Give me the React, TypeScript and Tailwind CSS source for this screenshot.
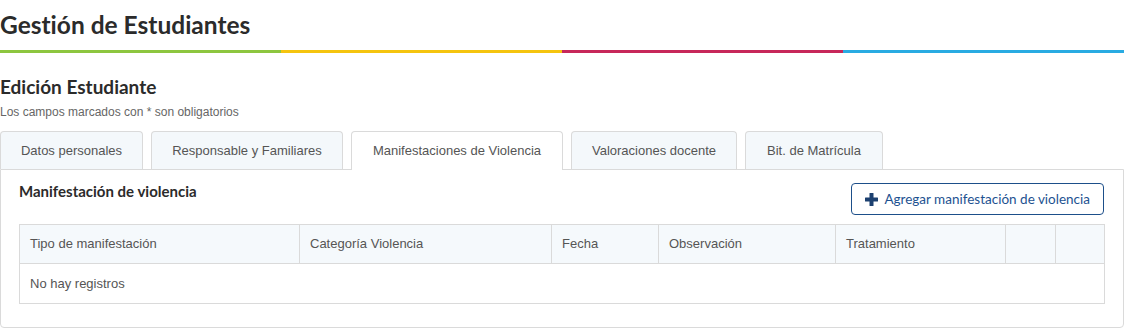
import React from "react";

const head = { fontFamily: "Lato, 'Noto Sans', sans-serif", fontVariantLigatures: "none" as const };

const tabs = [
  { label: "Datos personales", active: false, w: "w-[143px]" },
  { label: "Responsable y Familiares", active: false, w: "w-[192px]" },
  { label: "Manifestaciones de Violencia", active: true, w: "w-[212px]" },
  { label: "Valoraciones docente", active: false, w: "w-[166px]" },
  { label: "Bit. de Matrícula", active: false, w: "w-[138px]" },
];

const cols = [
  "Tipo de manifestación",
  "Categoría Violencia",
  "Fecha",
  "Observación",
  "Tratamiento",
  "",
  "",
];

export default function App() {
  return (
    <div
      className="w-[1124px] h-[335px] bg-white overflow-hidden text-[#555]"
      style={{ fontFamily: "'Liberation Sans', Arial, sans-serif" }}
    >
      <div className="h-[50px] flex items-center">
        <h1 style={head} className="text-[24.5px] leading-[30px] font-bold text-[#2b2b2b]">
          Gestión de Estudiantes
        </h1>
      </div>
      <div className="grid grid-cols-4 h-[3px]">
        <div className="bg-[#8dc63f]" />
        <div className="bg-[#f5c40f]" />
        <div className="bg-[#c7285a]" />
        <div className="bg-[#29abe2]" />
      </div>
      <h2 style={head} className="mt-[22px] text-[19px] leading-[24px] font-bold text-[#2b2b2b]">
        Edición Estudiante
      </h2>
      <p className="mt-[6px] text-[12px] leading-[15px] text-[#666]">
        Los campos marcados con * son obligatorios
      </p>
      <div className="mt-[11px] flex items-start gap-2 relative z-10">
        {tabs.map((t) => (
          <div
            key={t.label}
            className={
              (t.active
                ? "h-[39px] mb-[-1px] bg-white "
                : "h-[38px] bg-[#f4f8fb] ") +
              t.w +
              " flex items-center justify-center border border-b-0 border-[#dadada] rounded-t-[4px] text-[13px] text-[#555]"
            }
          >
            {t.label}
          </div>
        ))}
      </div>
      <div className="border border-[#dadada] rounded-b-[4px] px-[18px] pt-[13px] pb-[23px]">
        <div className="flex items-start justify-between">
          <div style={head} className="text-[15px] leading-[16px] font-bold text-[#2b2b2b]">
            Manifestación de violencia
          </div>
          <button
            style={head}
            className="mr-[1px] h-[32px] px-[13px] flex items-center gap-[6px] border border-[#1d4f8a] rounded-[4px] text-[13.5px] text-[#1d5291] bg-white"
          >
            <svg width="13" height="13" viewBox="0 0 13 13" className="shrink-0">
              <rect x="4.5" y="0" width="4" height="13" rx="0.5" fill="#1c4070" />
              <rect x="0" y="4.5" width="13" height="4" rx="0.5" fill="#1c4070" />
            </svg>
            Agregar manifestación de violencia
          </button>
        </div>
        <div className="mt-[9px] border border-[#dadada]">
          <div className="grid grid-cols-[280px_252px_107px_177px_170px_50px_1fr] h-[39px] bg-[#f5f9fc] border-b border-[#dadada]">
            {cols.map((c, i) => (
              <div
                key={i}
                className={
                  i < cols.length - 1
                    ? "px-[10px] flex items-center text-[13px] text-[#555] border-r border-[#dadada]"
                    : "px-[10px] flex items-center text-[13px] text-[#555]"
                }
              >
                {c}
              </div>
            ))}
          </div>
          <div className="h-[39px] px-[10px] flex items-center text-[13px] text-[#555]">
            No hay registros
          </div>
        </div>
      </div>
    </div>
  );
}
